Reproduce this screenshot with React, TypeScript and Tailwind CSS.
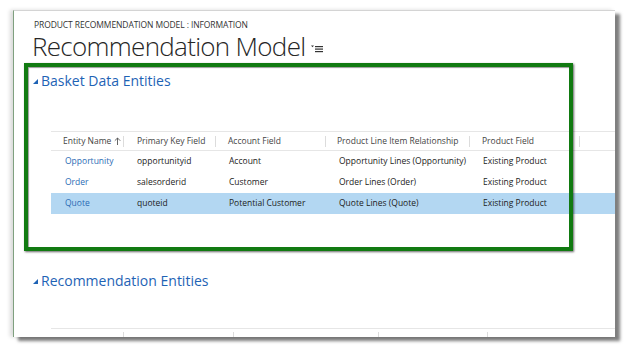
import React from "react";

const font = { fontFamily: '"Open Sans", "Noto Sans", sans-serif' };

function Triangle() {
  return (
    <svg width="5" height="5" viewBox="0 0 5 5" className="shrink-0">
      <polygon points="5,0 5,5 0,5" fill="#1e63b5" />
    </svg>
  );
}

function HeaderSep() {
  return <div className="absolute right-0 top-[4px] h-[11px] w-px bg-[#dcdcdc]" />;
}

const cols = [
  { w: "w-[73px]", pl: "pl-[12px]" },
  { w: "w-[92px]", pl: "pl-[13px]" },
  { w: "w-[110px]", pl: "pl-[12px]" },
  { w: "w-[144px]", pl: "pl-[11px]" },
  { w: "w-[110px]", pl: "pl-[12px]" },
];

const rows = [
  ["Opportunity", "opportunityid", "Account", "Opportunity Lines (Opportunity)", "Existing Product"],
  ["Order", "salesorderid", "Customer", "Order Lines (Order)", "Existing Product"],
  ["Quote", "quoteid", "Potential Customer", "Quote Lines (Quote)", "Existing Product"],
];

export default function App() {
  return (
    <div className="relative h-[347px] w-[628px] overflow-hidden bg-white" style={font}>
      <div className="pl-[13px] pt-[10px]">
        <div className="relative h-[327px] w-[602px] overflow-hidden border-l border-t border-l-[#7fa07f] border-t-[#d4d4d4] bg-white shadow-[5px_4px_3px_rgba(0,0,0,0.5),-3px_0_4px_rgba(0,0,0,0.15)]">
          {/* header */}
          <div className="pl-[20px] pt-[8px]">
            <div className="text-[8.5px] leading-[11px] tracking-[-0.1px] text-[#333]">
              PRODUCT RECOMMENDATION MODEL : INFORMATION
            </div>
            <div className="mb-[5px] mt-[3px] flex h-[26px] items-center">
              <div className="-ml-[2px] text-[26px] font-light leading-[26px] tracking-[-0.7px] text-[#262626]">
                Recommendation Model
              </div>
              <svg width="12" height="8" viewBox="0 0 12 8" className="ml-[6px] mt-[6px]">
                <polygon points="0,0.5 3,0.5 1.5,2.2" fill="#333" />
                <rect x="4" y="1" width="8" height="1.2" fill="#333" />
                <rect x="4" y="3.5" width="8" height="1.2" fill="#333" />
                <rect x="4" y="6" width="8" height="1.2" fill="#333" />
              </svg>
            </div>
          </div>

          {/* section 1 */}
          <div className="mt-[12px] flex items-center gap-[3px] pl-[19px]">
            <Triangle />
            <div className="text-[14px] leading-[20px] text-[#1e63b5]">Basket Data Entities</div>
          </div>

          <div className="ml-[37px] mt-[40px]">
            <div className="flex h-[20px] items-center border-y border-[#e6e6e6] text-[8.5px] text-[#444]">
              {["Entity Name", "Primary Key Field", "Account Field", "Product Line Item Relationship", "Product Field"].map(
                (h, i) => (
                  <div key={h} className={`relative flex h-full items-center ${cols[i].w} ${cols[i].pl}`}>
                    {h}
                    {i === 0 && (
                      <svg width="7" height="8" viewBox="0 0 7 8" className="ml-[3px]">
                        <path d="M3.5 8V1M0.8 3.7L3.5 1L6.2 3.7" stroke="#555" strokeWidth="0.9" fill="none" />
                      </svg>
                    )}
                    <HeaderSep />
                  </div>
                )
              )}
            </div>
            {rows.map((r, ri) => (
              <div
                key={ri}
                className={`flex h-[21px] items-center text-[8.5px] ${ri === 2 ? "bg-[#b3d7f2]" : ""} text-[#222]`}
              >
                {r.map((c, ci) => (
                  <div
                    key={ci}
                    className={`${cols[ci].w} ${ci === 0 ? "pl-[14px] text-[#2b6cb5]" : "pl-[13px]"}`}
                  >
                    {c}
                  </div>
                ))}
              </div>
            ))}
          </div>

          {/* section 2 */}
          <div className="mt-[57px] flex items-center gap-[3px] pl-[19px]">
            <Triangle />
            <div className="text-[14px] leading-[20px] text-[#1e63b5]">Recommendation Entities</div>
          </div>

          <div className="ml-[37px] mt-[37px] flex h-[20px] border-t border-[#e6e6e6]">
            {["w-[73px]", "w-[110px]", "w-[145px]", "w-[109px]"].map((w, i) => (
              <div key={i} className={`relative h-full ${w}`}>
                <div className="absolute right-0 top-[3px] h-[11px] w-px bg-[#dcdcdc]" />
              </div>
            ))}
          </div>

          {/* annotation box */}
          <div className="absolute left-[10px] top-[52px] h-[188px] w-[549px] border-[4px] border-[#117a11] shadow-[1px_1px_2px_rgba(0,0,0,0.6),inset_1px_1px_1px_rgba(0,0,0,0.4)]" />
        </div>
      </div>
    </div>
  );
}
